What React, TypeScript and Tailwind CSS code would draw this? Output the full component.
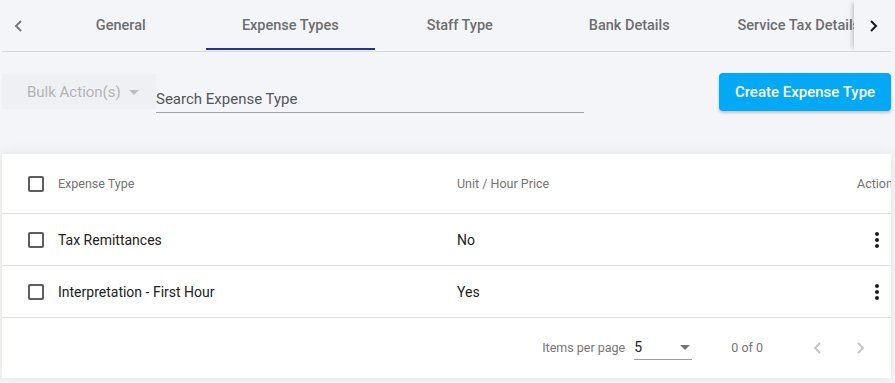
import { useState } from "react";

const tabs = ["General", "Expense Types", "Staff Type", "Bank Details", "Service Tax Details"];

const rows = [
  { name: "Tax Remittances", unit: "No" },
  { name: "Interpretation - First Hour", unit: "Yes" },
];

function Chevron({ dir, className }: { dir: "left" | "right"; className?: string }) {
  return (
    <svg width="10" height="14" viewBox="0 0 10 14" className={className}>
      <polyline
        points={dir === "left" ? "7,2 2,7 7,12" : "3,2 8,7 3,12"}
        fill="none"
        stroke="currentColor"
        strokeWidth="2"
      />
    </svg>
  );
}

function Checkbox() {
  return <span className="block h-[16px] w-[16px] shrink-0 rounded-[2px] border-2 border-[#5f5f5f] bg-white" />;
}

function MoreVert() {
  return (
    <svg width="24" height="24" viewBox="0 0 24 24" className="text-[#1f1f1f]">
      <path
        fill="currentColor"
        d="M12 8c1.1 0 2-.9 2-2s-.9-2-2-2-2 .9-2 2 .9 2 2 2zm0 2c-1.1 0-2 .9-2 2s.9 2 2 2 2-.9 2-2-.9-2-2-2zm0 6c-1.1 0-2 .9-2 2s.9 2 2 2 2-.9 2-2-.9-2-2-2z"
      />
    </svg>
  );
}

export default function App() {
  const [active, setActive] = useState(1);

  return (
    <div className="h-[383px] w-[895px] overflow-hidden bg-[#f4f5f9] pl-[2px] pr-[4px] font-['Roboto',sans-serif]">
      {/* tab bar */}
      <div className="flex h-[52px] border-b border-[#d9dade]">
        <button type="button" className="flex w-[34px] shrink-0 items-center justify-center text-[#7a7a7a]">
          <Chevron dir="left" />
        </button>
        <div className="flex flex-1 overflow-hidden">
          {tabs.map((t, i) => (
            <button
              key={t}
              type="button"
              onClick={() => setActive(i)}
              className="relative flex w-[169.5px] shrink-0 items-center justify-center whitespace-nowrap text-[14.5px] font-medium text-[#6e6e6e]"
            >
              {t}
              {i === active && <span className="absolute bottom-[1px] left-0 right-0 h-[2px] bg-[#27348f]" />}
            </button>
          ))}
        </div>
        <button
          type="button"
          className="z-10 flex w-[37px] shrink-0 items-center justify-center bg-[#f4f5f9] text-[#1a1a1a] shadow-[-4px_0_5px_-3px_rgba(0,0,0,0.25)]"
        >
          <Chevron dir="right" />
        </button>
      </div>

      {/* toolbar */}
      <div className="mt-[21px] flex h-[38px] items-start">
        <button
          type="button"
          className="mt-[1px] flex h-[35px] w-[154px] shrink-0 items-center gap-[8px] bg-[#eff0f4] pl-[25px] pt-[2px] text-[15px] text-[#b4b4b4]"
        >
          Bulk Action(s)
          <svg width="10" height="5" viewBox="0 0 10 5">
            <polygon points="0,0 10,0 5,5" fill="#bdbdbd" />
          </svg>
        </button>
        <div className="flex h-[40px] w-[428px] items-end border-b border-[#a3a3a3] pb-[2px] text-[15px] text-[#555]">
          Search Expense Type
        </div>
        <button
          type="button"
          className="ml-auto h-[38px] w-[172px] rounded-[4px] bg-[#03a9f4] text-[15px] font-medium text-white shadow-[0_2px_3px_rgba(0,0,0,0.2)]"
        >
          Create Expense Type
        </button>
      </div>

      {/* table */}
      <div className="mt-[43px] overflow-hidden bg-white shadow-[0_0_14px_rgba(0,0,0,0.07)]">
        <div className="flex h-[60px] items-center border-b border-[#e2e2e2] pt-[1px] text-[12.5px] text-[#737373]">
          <div className="flex w-[455px] shrink-0 items-center pl-[26px]">
            <Checkbox />
            <span className="ml-[14px]">Expense Type</span>
          </div>
          <div className="flex-1">Unit / Hour Price</div>
          <div className="w-[34px] shrink-0 whitespace-nowrap">Actions</div>
        </div>
        {rows.map((r) => (
          <div key={r.name} className="flex h-[52px] items-center border-b border-[#e2e2e2] pt-[1px] text-[14px] text-[#212121]">
            <div className="flex w-[455px] shrink-0 items-center pl-[26px]">
              <Checkbox />
              <span className="ml-[14px]">{r.name}</span>
            </div>
            <div className="flex-1">{r.unit}</div>
            <div className="flex w-[34px] shrink-0 pl-[8px]">
              <MoreVert />
            </div>
          </div>
        ))}
        <div className="flex h-[60px] items-center justify-end pr-[11px] text-[12.5px] text-[#757575]">
          <span>Items per page</span>
          <div className="ml-[9px] flex h-[24px] w-[58px] items-center justify-between border-b border-[#9e9e9e] pr-[2px] text-[14px] text-[#212121]">
            5
            <svg width="10" height="5" viewBox="0 0 10 5">
              <polygon points="0,0 10,0 5,5" fill="#757575" />
            </svg>
          </div>
          <span className="ml-[39px]">0 of 0</span>
          <button type="button" className="ml-[35px] flex h-[40px] w-[40px] items-center justify-center text-[#c6c6c6]">
            <Chevron dir="left" />
          </button>
          <button type="button" className="ml-[2px] flex h-[40px] w-[40px] items-center justify-center text-[#c6c6c6]">
            <Chevron dir="right" />
          </button>
        </div>
      </div>
    </div>
  );
}
